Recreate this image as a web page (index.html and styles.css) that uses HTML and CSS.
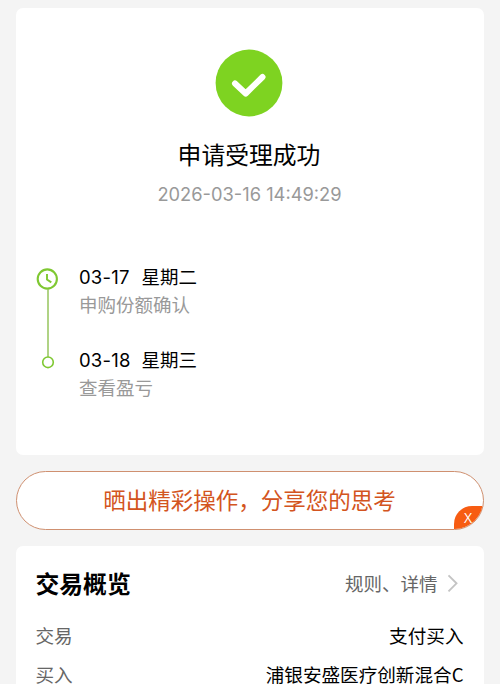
FILE: index.html
```
<!DOCTYPE html>
<html lang="zh-CN">
<head>
  <meta charset="UTF-8">
  <meta name="viewport" content="width=device-width, initial-scale=1.0">
  <title>交易结果</title>
  <link rel="stylesheet" href="styles.css">
</head>
<body>
  <div class="container">
    <!-- 受理结果 -->
    <div class="card result">
      <svg class="success" viewBox="0 0 68 68">
        <circle cx="34" cy="34" r="33.4" fill="#7ed321"/>
        <path d="M20 34.5 L30.7 44.5 L47.5 28" fill="none" stroke="#fff" stroke-width="6" stroke-linecap="round" stroke-linejoin="round"/>
      </svg>
      <h1>申请受理成功</h1>
      <div class="time">2026-03-16 14:49:29</div>

      <div class="steps">
        <div class="line">
          <svg width="24" height="106" viewBox="0 0 24 106" fill="none" stroke="#7fc832">
            <circle cx="12.3" cy="14" r="9.6" stroke-width="2.1"/>
            <path d="M12 9 V14.5 L16.3 17.4" stroke-width="1.9"/>
            <path d="M13 24 V92" stroke="#96c45c" stroke-width="1.5"/>
            <circle cx="13" cy="97.3" r="5.3" stroke-width="1.6"/>
          </svg>
        </div>
        <div class="step-list">
          <div class="step">
            <div class="date"><span class="num">03-17</span>星期二</div>
            <div class="desc">申购份额确认</div>
          </div>
          <div class="step">
            <div class="date"><span class="num">03-18</span>星期三</div>
            <div class="desc">查看盈亏</div>
          </div>
        </div>
      </div>
    </div>

    <!-- 分享横幅 -->
    <div class="banner">
      <span>晒出精彩操作，分享您的思考</span>
      <button class="close">X</button>
    </div>

    <!-- 交易概览 -->
    <div class="card overview">
      <div class="head">
        <h2>交易概览</h2>
        <div class="more">规则、详情
          <svg width="12" height="20" viewBox="0 0 12 20" fill="none" stroke="#c4c4c4" stroke-width="1.9">
            <path d="M1.5 2.3 L9.5 10.3 L1.5 18.3"/>
          </svg>
        </div>
      </div>
      <div class="row"><span class="label">交易</span><span>支付买入</span></div>
      <div class="row"><span class="label">买入</span><span>浦银安盛医疗创新混合C</span></div>
    </div>
  </div>
</body>
</html>
```

FILE: styles.css
```
* {
  box-sizing: border-box;
}
body {
  margin: 0;
  height: 684px;
  overflow: hidden;
  background-color: #f4f4f4;
  font-family: "Noto Sans CJK SC", sans-serif;
  color: #000;
}

.container {
  padding: 8px 16.5px 0 15.5px;
}
.card {
  background-color: #fff;
  border-radius: 7px;
}
.result {
  height: 447px;
  padding-top: 41px;
  display: flex;
  flex-direction: column;
  align-items: center;
}
.success {
  width: 68px;
  height: 68px;
  margin-right: 1px;
}
h1 {
  margin: 19px 1px 0 0;
  font-size: 23.8px;
  line-height: 36px;
  font-weight: 400;
}
.time {
  margin-top: 8px;
  font-family: Inter, sans-serif;
  font-size: 18.3px;
  line-height: 28px;
  color: #999;
}

.steps {
  align-self: stretch;
  display: flex;
  margin-top: 54px;
  padding-left: 19px;
}
.line {
  width: 44.5px;
  padding-top: 3px;
}
.line svg {
  display: block;
}
.step {
  height: 83px;
  font-size: 18.5px;
}
.date {
  display: flex;
  line-height: 28px;
}
.num {
  width: 62.5px;
  padding-top: 1px;
  font-family: Inter, sans-serif;
  font-size: 18.5px;
  letter-spacing: 0.2px;
}
.desc {
  line-height: 27px;
  color: #999;
}

.banner {
  position: relative;
  display: flex;
  justify-content: center;
  align-items: center;
  height: 59px;
  margin: 16px 0;
  padding-bottom: 4px;
  border: 1px solid #cf9070;
  border-radius: 30px;
  overflow: hidden;
  background-color: #fff;
  font-size: 22.5px;
  color: #d35420;
}
.close {
  position: absolute;
  right: 0;
  bottom: 0;
  width: 29px;
  height: 23px;
  padding: 0;
  border: none;
  border-radius: 18px 0 0 0;
  background-color: #f75c12;
  font-family: "Open Sans", sans-serif;
  font-size: 14px;
  line-height: 22px;
  color: #fff;
}

.overview {
  height: 138px;
  padding: 18px 20px 0;
  border-radius: 7px 7px 0 0;
}
.head {
  display: flex;
  justify-content: space-between;
  align-items: center;
  height: 38px;
  margin-bottom: 13px;
}
h2 {
  margin: 0;
  font-size: 23.8px;
  line-height: 38px;
}
.more {
  display: flex;
  align-items: center;
  gap: 9px;
  padding-right: 5px;
  font-size: 18.5px;
  color: #666;
}
.row {
  display: flex;
  justify-content: space-between;
  height: 39px;
  font-size: 18.6px;
  line-height: 39px;
}
.label {
  color: #666;
}
```
